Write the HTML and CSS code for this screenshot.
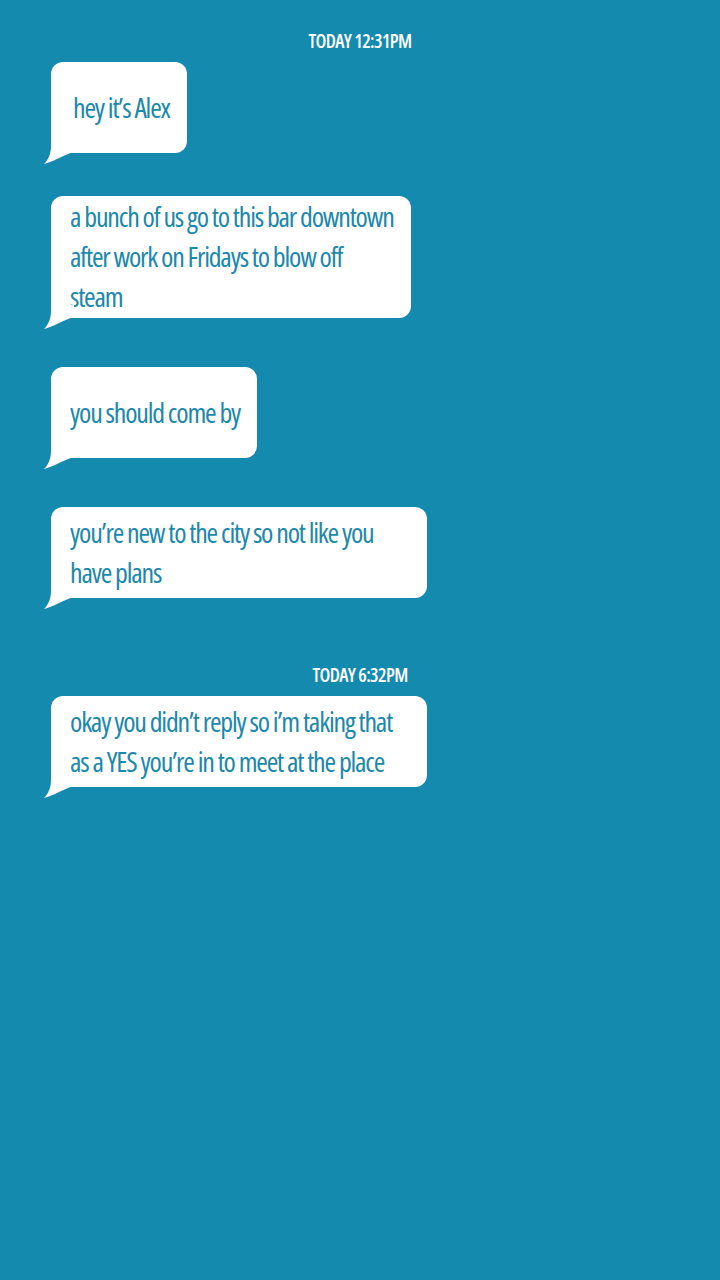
FILE: index.html
```html
<!DOCTYPE html>
<html>
<head><meta charset="utf-8"><link rel="stylesheet" href="styles.css"></head>
<body>
<main class="chat">
  <div class="stamp">TODAY 12:31PM</div>

  <div class="bubble bubble--first">
    <p class="msg msg--indent">hey it’s Alex</p>
    <svg class="tail" viewBox="0 0 34 24" width="34" height="24"><path d="M8 0 L8 6 C8 14 5 20 1 24 C10 22 18 16 31 12 L31 0 Z"/></svg>
  </div>

  <div class="bubble bubble--tight">
    <p class="msg">a bunch of us go to this bar downtown<br>after work on Fridays to blow off<br>steam</p>
    <svg class="tail" viewBox="0 0 34 24" width="34" height="24"><path d="M8 0 L8 6 C8 14 5 20 1 24 C10 22 18 16 31 12 L31 0 Z"/></svg>
  </div>

  <div class="bubble">
    <p class="msg">you should come by</p>
    <svg class="tail" viewBox="0 0 34 24" width="34" height="24"><path d="M8 0 L8 6 C8 14 5 20 1 24 C10 22 18 16 31 12 L31 0 Z"/></svg>
  </div>

  <div class="bubble bubble--wide">
    <p class="msg">you’re new to the city so not like you<br>have plans</p>
    <svg class="tail" viewBox="0 0 34 24" width="34" height="24"><path d="M8 0 L8 6 C8 14 5 20 1 24 C10 22 18 16 31 12 L31 0 Z"/></svg>
  </div>

  <div class="stamp stamp--later">TODAY 6:32PM</div>

  <div class="bubble bubble--first bubble--wide">
    <p class="msg">okay you didn’t reply so i’m taking that<br>as a YES you’re in to meet at the place</p>
    <svg class="tail" viewBox="0 0 34 24" width="34" height="24"><path d="M8 0 L8 6 C8 14 5 20 1 24 C10 22 18 16 31 12 L31 0 Z"/></svg>
  </div>
</main>
</body>
</html>
```
FILE: styles.css
```css
html, body {
  margin: 0;
  height: 100%;
}

body {
  background: #148aae;
}

.chat {
  display: flex;
  flex-direction: column;
  align-items: flex-start;
  padding: 29px 0 0;
}

.stamp,
.msg {
  font-family: "Open Sans", sans-serif;
  font-stretch: 75%;
}

.stamp {
  align-self: stretch;
  text-align: center;
  color: #ffffff;
  font-size: 19px;
  font-weight: 560;
  letter-spacing: -0.6px;
  line-height: 24px;
  height: 24px;
}

.stamp--later {
  margin-top: 65px;
}

.bubble {
  position: relative;
  box-sizing: border-box;
  width: fit-content;
  min-height: 91px;
  margin: 49px 0 0 51px;
  padding: 0 17px 2px 19px;
  display: flex;
  align-items: center;
  background: #ffffff;
  border-radius: 12px;
}

.bubble--first {
  margin-top: 9px;
}

.bubble--tight {
  margin-top: 43px;
}

.bubble--wide {
  width: 376px;
}

.msg {
  margin: 0;
  color: #1c88ac;
  font-size: 28px;
  font-weight: 400;
  letter-spacing: -1.2px;
  line-height: 40px;
  white-space: nowrap;
}

.msg--indent {
  margin-left: 3px;
}

.tail {
  position: absolute;
  left: -8px;
  bottom: -11px;
  fill: #ffffff;
  display: block;
}
```
